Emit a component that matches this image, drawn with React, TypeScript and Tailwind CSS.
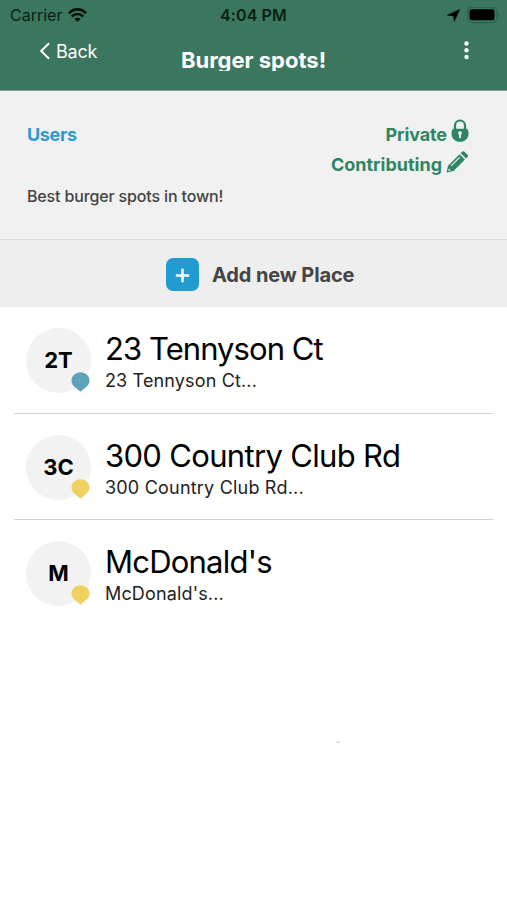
type Place = {
  initials: string;
  name: string;
  pin: string;
  spacing: string;
  subSpacing: string;
};

const places: Place[] = [
  { initials: '2T', name: '23 Tennyson Ct', pin: 'text-[#5ea2b8]', spacing: 'tracking-[-0.93px]', subSpacing: 'tracking-[0.14px]' },
  { initials: '3C', name: '300 Country Club Rd', pin: 'text-[#f0d060]', spacing: 'tracking-[-0.67px]', subSpacing: 'tracking-[0.2px]' },
  { initials: 'M', name: "McDonald's", pin: 'text-[#f0d060]', spacing: 'tracking-[-0.78px]', subSpacing: 'tracking-[0.15px]' },
];

function WifiIcon() {
  return (
    <svg width="19" height="15" viewBox="0 0 20 15" fill="none" stroke="#07110d">
      <path d="M1 5.3C6-.2 14-.2 19 5.3" strokeWidth="2.9" />
      <path d="M4 8.7c3.4-3.6 8.6-3.6 12 0" strokeWidth="2.7" />
      <path d="M10 14.2 6.7 11.1c1.9-1.8 4.7-1.8 6.6 0z" fill="#07110d" stroke="none" />
    </svg>
  );
}

function StatusBar() {
  return (
    <div className="grid h-[30px] grid-cols-3 items-center text-[#0a1f17]">
      <div className="flex items-center gap-[6px] pl-[10px]">
        <span className="text-[16px] leading-5">Carrier</span>
        <WifiIcon />
      </div>
      <div className="text-center text-[16px] leading-5 font-semibold tracking-[0.1px]">4:04 PM</div>
      <div className="flex items-center justify-end gap-[7px] pr-[7px]">
        <svg width="13" height="13" viewBox="0 0 13 13" fill="#000">
          <path d="M12.7.4 7.2 12.6 6.6 6.9.3 6.2z" stroke="#000" strokeWidth=".5" />
        </svg>
        <svg width="33" height="17" viewBox="0 0 33 17">
          <rect x=".7" y=".2" width="28.8" height="15.4" rx="4.3" fill="none" stroke="#2b634c" strokeWidth="1.2" />
          <rect x="2.5" y="2.3" width="25" height="11" rx="2.3" fill="#000" />
          <path d="M31 5.500v5c2-.8 2-4.200 0-5z" fill="#2b634c" />
        </svg>
      </div>
    </div>
  );
}

function Header() {
  return (
    <header className="h-[91px] border-b border-[#7fa595] bg-[#3b765e]">
      <StatusBar />
      <div className="grid grid-cols-[1fr_auto_1fr] text-white">
        <button className="flex h-[42px] items-center gap-[5px] self-start pl-[39px]">
          <svg width="12" height="18" viewBox="0 0 12 18" fill="none" stroke="currentColor" strokeWidth="2">
            <path d="M10 1.2 2.2 9l7.800 7.800" />
          </svg>
          <span className="text-[18px] tracking-[-0.2px]">Back</span>
        </button>
        {/* fixed height cuts the descenders of the title */}
        <h1 className="h-[41px] overflow-hidden pt-[16px] text-[22px] leading-[29px] font-bold">
          Burger spots!
        </h1>
        <div className="flex justify-end pt-[11px] pr-[38px]">
          <svg width="5" height="19" viewBox="0 0 5 19" fill="currentColor">
            <circle cx="2.500" cy="2.500" r="2.200" />
            <circle cx="2.500" cy="9.300" r="2.200" />
            <circle cx="2.500" cy="16" r="2.200" />
          </svg>
        </div>
      </div>
    </header>
  );
}

function LockIcon() {
  return (
    <svg width="18" height="24" viewBox="0 0 18 24">
      <path d="M4 11V6.500a5 5 0 0 1 10 0V11" fill="none" stroke="#2f8563" strokeWidth="2.200" />
      <path d="M2 9.800h14c1 1.200 1.500 2.700 1.500 4.700 0 4.700-3.500 8.300-8.500 8.300S.5 19.200.5 14.500C.5 12.500 1 11 2 9.800z" fill="#2f8563" />
      <path d="M9 12.200a1.900 1.900 0 0 1 1 3.500v3.300H8v-3.300a1.900 1.900 0 0 1 1-3.500z" fill="#f1f1f1" />
    </svg>
  );
}

function PencilIcon() {
  return (
    <svg className="mt-[1px]" width="23" height="22" viewBox="0 0 23 22">
      <path d="M13.600 3.200 18.900 8.500 7.600 20 .6 21.500 2 14.700z" fill="#2f8563" />
      <path d="m14.700 2.300 1.500-1.500c.7-.7 1.600-.7 2.300 0l3 3c.7.7.7 1.500 0 2.200L20 7.500z" fill="#2f8563" />
      <path d="m5 14.900 8.700-8.500" stroke="#f1f1f1" strokeWidth="1.200" />
      <path d="m2.800 17.400 2 2-2.500.6z" fill="#f1f1f1" />
    </svg>
  );
}

function Details() {
  return (
    <section className="h-[149px] border-b border-[#dedede] bg-[#f1f1f1] pt-[28px] pr-[38px] pl-[27px]">
      <div className="flex justify-between">
        <a className="text-[18px] leading-[31px] font-bold tracking-[-0.35px] text-[#2c9bd0]">Users</a>
        <div className="font-bold text-[#2f8563]">
          <div className="flex h-[31px] justify-end gap-[4px]">
            <span className="text-[18px] leading-[31px] tracking-[-0.1px]">Private</span>
            <LockIcon />
          </div>
          <div className="flex h-[31px] justify-end gap-[4px]">
            <span className="text-[18px] leading-[30px]">Contributing</span>
            <PencilIcon />
          </div>
        </div>
      </div>
      <p className="mt-[4px] text-[16px] leading-[22px] font-medium tracking-[-0.15px] text-[#444]">Best burger spots in town!</p>
    </section>
  );
}

function PlaceRow({ place }: { place: Place }) {
  return (
    <li className="flex h-[106.500px] gap-[14px] border-b border-[#d2d2d2] pt-[21px] pl-[12px] last:border-0">
      <div className="relative flex size-[65px] items-center justify-center rounded-full bg-[#f2f2f2] text-[22px] font-bold text-black">
        {place.initials}
        <svg className={`absolute right-[1px] bottom-[1px] ${place.pin}`} width="19" height="20" viewBox="0 0 19 20">
          <path d="M9.500.3c5 0 9 3.600 9 8.500 0 4.300-3.400 6.300-9 11-5.600-4.700-9-6.700-9-11C.5 3.900 4.500.3 9.500.3z" fill="currentColor" />
        </svg>
      </div>
      <div>
        <div className={`text-[31px] leading-[42px] text-black ${place.spacing}`}>{place.name}</div>
        <div className={`text-[18px] leading-[21px] text-[#222] ${place.subSpacing}`}>{place.name}...</div>
      </div>
    </li>
  );
}

export default function App() {
  return (
    <main className="h-[900px] w-[507px] overflow-hidden bg-white font-['Inter',sans-serif] whitespace-nowrap">
      <Header />
      <Details />
      <button className="flex h-[67px] w-full items-center gap-[13px] bg-[#eee] pt-[1px] pl-[166px]">
        <span className="flex size-[33px] items-center justify-center rounded-[7px] bg-[#229bd0]">
          <svg className="mt-[2px] mr-[1px]" width="15" height="15" viewBox="0 0 15 15" stroke="#fff" strokeWidth="2.500">
            <path d="M7.500.8v13.400M.8 7.500h13.400" />
          </svg>
        </span>
        <span className="pt-[1px] text-[20px] font-bold tracking-[-0.12px] text-[#444]">Add new Place</span>
      </button>
      <ul className="mr-[14px] ml-[14px]">
        {places.map((place) => (
          <PlaceRow key={place.name} place={place} />
        ))}
      </ul>
      <div className="mt-[114px] ml-[336px] h-[2px] w-[4px] bg-[#e2e2e2]" />
    </main>
  );
}
